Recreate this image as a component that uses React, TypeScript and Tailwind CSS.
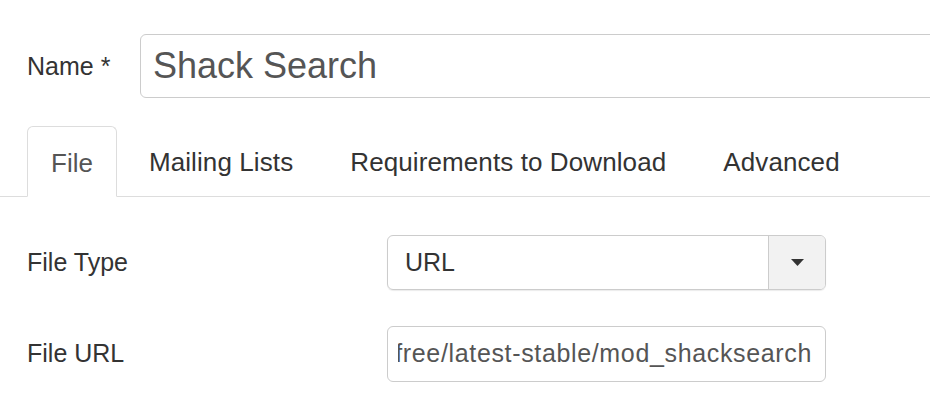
import React from "react";

export default function App() {
  const font = { fontFamily: '"Liberation Sans", Arial, sans-serif' };
  return (
    <div className="w-[930px] h-[408px] bg-white overflow-hidden text-[#333]" style={font}>
      {/* Name row */}
      <div className="flex items-center pt-[34px] pl-[27px]">
        <div className="w-[113px] text-[25px] leading-none">Name *</div>
        <div className="flex-1 mr-[-20px] h-[64px] border border-[#cccccc] rounded-l-[6px] flex items-center pl-[12px] text-[36px] text-[#555]">
          Shack Search
        </div>
      </div>

      {/* Tabs */}
      <div className="mt-[28px] pl-[27px] flex items-end border-b border-[#dddddd] h-[71px]">
        <div className="h-[71px] -mb-px px-[23px] pt-[3px] border border-[#dddddd] border-b-white bg-white rounded-t-[6px] flex items-center text-[26px] text-[#555] mr-[7px]">
          File
        </div>
        <div className="h-[70px] px-[25px] pt-[3px] flex items-center text-[26px] tracking-[0.1px] text-[#333] mr-[7px]">
          Mailing Lists
        </div>
        <div className="h-[70px] px-[25px] pt-[3px] flex items-center text-[26px] tracking-[0.1px] text-[#333] mr-[7px]">
          Requirements to Download
        </div>
        <div className="h-[70px] px-[25px] pt-[3px] flex items-center text-[26px] tracking-[0.1px] text-[#333]">
          Advanced
        </div>
      </div>

      {/* File Type */}
      <div className="flex items-center pl-[27px] mt-[38px]">
        <div className="w-[360px] text-[25px]">File Type</div>
        <div className="w-[439px] h-[55px] border border-[#cccccc] rounded-[6px] flex shadow-[0_1px_1px_rgba(0,0,0,0.08)] overflow-hidden">
          <div className="flex-1 flex items-center pl-[17px] text-[25px] text-[#333]">URL</div>
          <div className="w-[57px] bg-[#f2f2f2] border-l border-[#cccccc] flex items-center justify-center">
            <svg width="13" height="7" viewBox="0 0 13 7">
              <path d="M0 0 L13 0 L6.5 7 Z" fill="#333" />
            </svg>
          </div>
        </div>
      </div>

      {/* File URL */}
      <div className="flex items-center pl-[27px] mt-[36px]">
        <div className="w-[360px] text-[25px]">File URL</div>
        <div className="w-[439px] h-[56px] border border-[#cccccc] rounded-[6px] overflow-hidden pl-[10px] pr-[13px]">
          <div className="h-full overflow-hidden flex items-center justify-end text-[25px] tracking-[0.65px] text-[#555] whitespace-nowrap">
            <span>free/latest-stable/mod_shacksearch</span>
          </div>
        </div>
      </div>
    </div>
  );
}
